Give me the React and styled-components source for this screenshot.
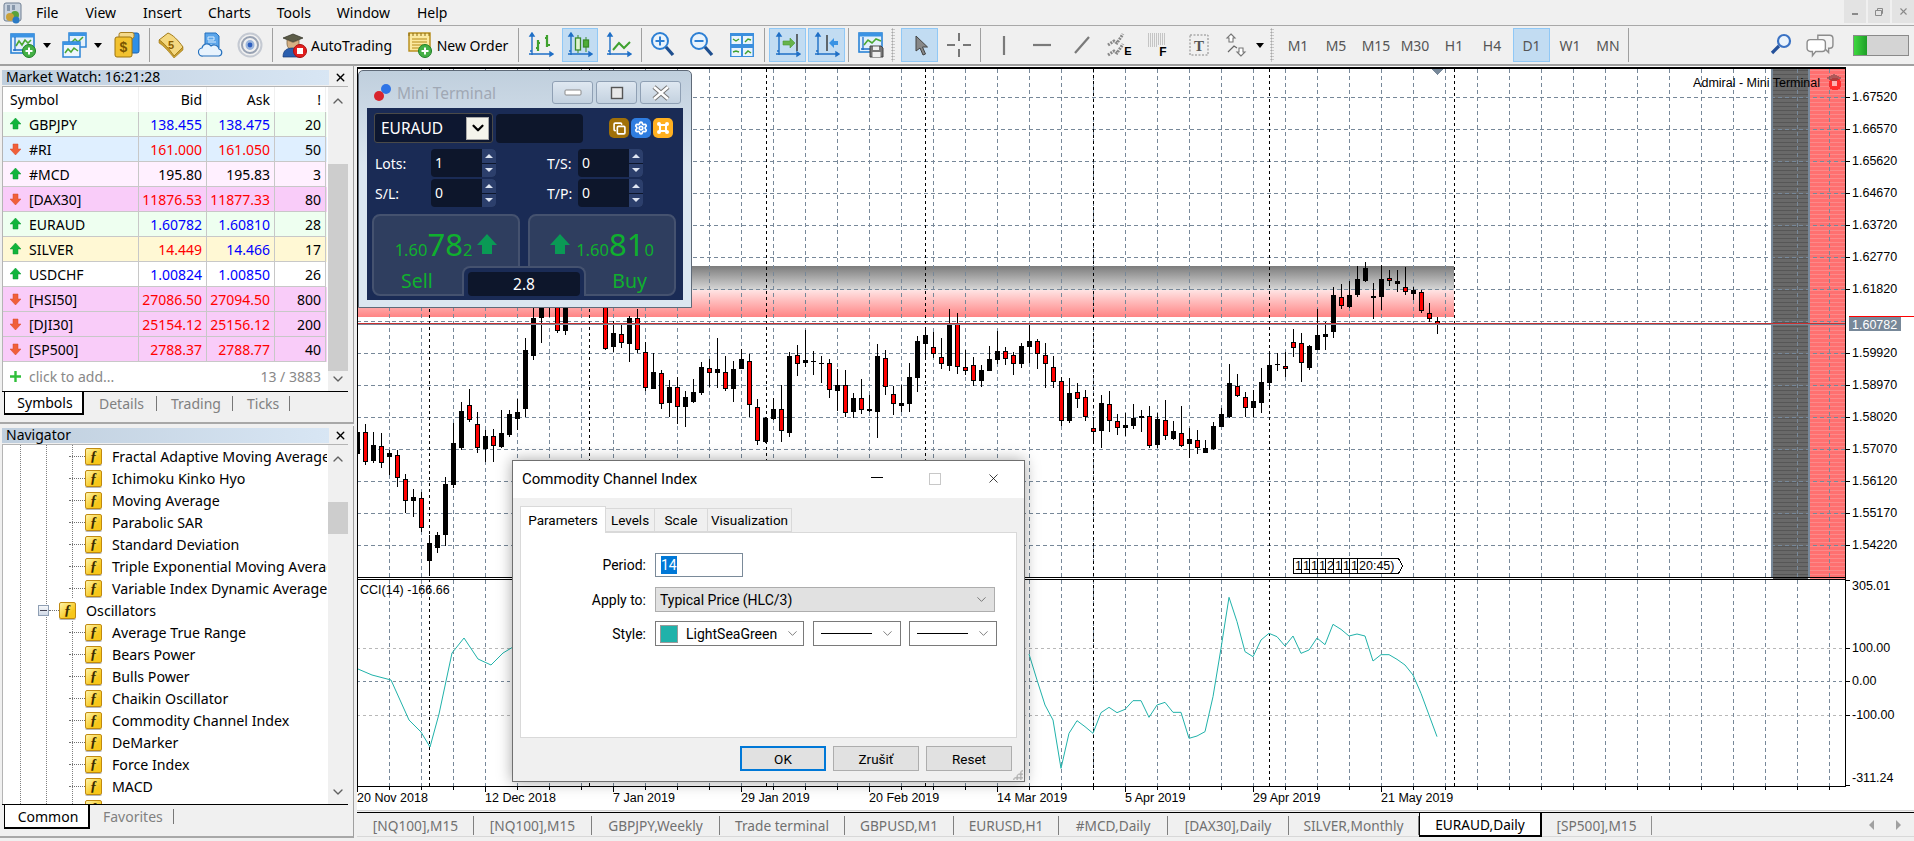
import React from 'react';
import styled, { createGlobalStyle } from 'styled-components';
import { ChevronDown, ChevronUp, X, Settings, Copy } from 'lucide-react';

const UI_FONT = '"Noto Sans", "Open Sans", sans-serif';
const DIALOG_FONT = 'Roboto, "Noto Sans", sans-serif';

const GlobalStyle = createGlobalStyle`
  html, body { margin: 0; padding: 0; background: #f0f0f0; }
  * { box-sizing: border-box; }
`;

const Page = styled.div`
  width: 1914px;
  height: 841px;
  overflow: hidden;
  display: flex;
  flex-direction: column;
  background: #f0f0f0;
  font-family: ${UI_FONT};
  font-size: 14px;
  color: #000;
`;

/* menu + toolbar */
const MenuBar = styled.div`
  height: 26px;
  flex: none;
  display: flex;
  align-items: center;
  border-bottom: 1px solid #a8a8a8;
  padding-left: 3px;
`;

const MenuItem = styled.span`
  margin-left: ${p => p.$ml}px;
  font-size: 14px;
  line-height: 25px;
`;

const WinButtons = styled.div`
  margin-left: auto;
  display: flex;
  gap: 2px;
  align-self: flex-start;
`;

const WinButton = styled.div`
  width: 22px;
  height: 23px;
  background: #e3e3e3;
  color: #8a8a8a;
  display: flex;
  align-items: center;
  justify-content: center;
`;

const Toolbar = styled.div`
  height: 40px;
  flex: none;
  display: flex;
  align-items: center;
  padding-left: 6px;
  border-bottom: 2px solid #a0a0a0;
`;

const Tool = styled.div`
  flex: none;
  width: ${p => p.$w || 36}px;
  height: 34px;
  margin-left: ${p => p.$ml || 0}px;
  display: flex;
  align-items: center;
  justify-content: center;
  gap: 4px;
  border: 1px solid ${p => (p.$active ? '#90c8f6' : 'transparent')};
  background: ${p => (p.$active ? '#c2dcf2' : 'transparent')};
  color: ${p => p.$color || '#000'};
  font-size: 14px;
`;

const ToolSep = styled.div`
  flex: none;
  width: 1px;
  height: 34px;
  margin-left: ${p => p.$ml || 4}px;
  background: #a0a0a0;
`;

const Grip = styled.div`
  flex: none;
  width: 4px;
  height: 34px;
  margin-left: ${p => p.$ml || 0}px;
  background-image: radial-gradient(#a8a8a8 45%, transparent 50%);
  background-size: 3px 3px;
`;

const DropCaret = styled.div`
  flex: none;
  width: ${p => p.$w || 12}px;
  height: 34px;
  display: flex;
  align-items: center;
  justify-content: center;
  &::after {
    content: '';
    border-left: 4px solid transparent;
    border-right: 4px solid transparent;
    border-top: 5px solid #000;
  }
`;

const StatusMeter = styled.div`
  width: 56px;
  height: 21px;
  margin: 0 5px 0 15px;
  flex: none;
  border: 1px solid #8a8a8a;
  background: linear-gradient(90deg, #3ed83e 0, #1e9e28 13px, #d4d4d4 13px);
`;

/* left column */
const Body = styled.div`
  flex: 1;
  min-height: 0;
  display: flex;
`;

const LeftColumn = styled.div`
  width: 354px;
  margin-right: 3px;
  flex: none;
  display: flex;
  flex-direction: column;
`;

const Panel = styled.div`
  width: 354px;
  height: ${p => p.$h}px;
  margin-top: ${p => p.$mt || 0}px;
  padding: ${p => p.$pt}px 5px 0 2px;
  border-right: 1px solid #a0a0a0;
  border-bottom: 2px solid #a8a8a8;
  flex: none;
`;

const PanelTitle = styled.div`
  height: 15px;
  width: 327px;
  position: relative;
  background: linear-gradient(90deg, #bfcedd, #d8e6f4);
  font-size: 14px;
  line-height: 14px;
  padding-left: 4px;
  white-space: nowrap;
`;

const PanelClose = styled(X)`
  position: absolute;
  left: 332px;
  top: 1px;
`;

const PanelBox = styled.div`
  margin-top: 1px;
  height: ${p => p.$h}px;
  display: flex;
  border: 1px solid #b4b4b4;
  border-width: 1px 1px 0 1px;
  background: #fff;
`;

const WatchTable = styled.div`
  width: 324px;
  flex: none;
`;

const WatchRow = styled.div`
  display: grid;
  grid-template-columns: 136px 68px 68px 51px;
  height: ${p => p.$h || 25}px;
  background: ${p => p.$bg || '#fff'};
`;

const WatchCell = styled.div`
  display: flex;
  align-items: center;
  justify-content: ${p => (p.$right ? 'flex-end' : 'flex-start')};
  padding: ${p => (p.$right ? '0 4px 0 0' : '0 0 0 7px')};
  gap: 8px;
  border-right: 1px solid ${p => (p.$head ? '#f0f0f0' : '#c8c8c8')};
  border-bottom: 1px solid ${p => (p.$head ? '#fff' : '#c8c8c8')};
  color: ${p => p.$color || '#000'};
  font-size: 14px;
  white-space: nowrap;
`;

const AddRow = styled.div`
  height: 29px;
  display: flex;
  align-items: center;
  gap: 8px;
  padding: 0 6px 0 7px;
  color: #888;
  font-size: 14px;
`;

const AddCount = styled.span`
  margin-left: auto;
`;

const ScrollBar = styled.div`
  width: 20px;
  margin-left: 1px;
  flex: none;
  position: relative;
  background: #f0f0f0;
  color: #606060;
  display: flex;
  flex-direction: column;
  justify-content: space-between;
  align-items: center;
  padding: ${p => p.$pad};
`;

const ScrollThumb = styled.div`
  position: absolute;
  left: 0;
  right: 0;
  top: ${p => p.$top}px;
  height: ${p => p.$h}px;
  background: #cdcdcd;
`;

const PanelTabs = styled.div`
  height: ${p => p.$h}px;
  display: flex;
  align-items: flex-start;
  border-top: 1px solid #000;
  padding-left: 2px;
`;

const PanelTab = styled.div`
  width: ${p => p.$w}px;
  height: ${p => (p.$active ? p.$h - 1 : 15)}px;
  margin-top: ${p => (p.$active ? 0 : 4)}px;
  display: flex;
  align-items: center;
  justify-content: ${p => (p.$active ? 'center' : 'flex-start')};
  padding-left: ${p => (p.$active ? 3 : p.$pl || 14)}px;
  background: ${p => (p.$active ? '#fff' : 'transparent')};
  border: ${p => (p.$active ? '1px solid #000' : 'none')};
  border-top: none;
  border-bottom-width: ${p => (p.$active ? 2 : 0)}px;
  border-right: ${p => (p.$active ? '2px solid #000' : '1px solid #777')};
  color: ${p => (p.$active ? '#000' : '#808080')};
  font-size: 14px;
`;

/* navigator tree */
const Tree = styled.div`
  width: 324px;
  flex: none;
  overflow: hidden;
`;

const guideLayer = x => `linear-gradient(#808080 50%, transparent 50%) ${x}px 0 / 1px 2px repeat-y`;

const TreeRow = styled.div`
  height: 22px;
  display: flex;
  align-items: center;
  white-space: nowrap;
  padding-left: ${p => (p.$group ? 35 : 66)}px;
  background: ${p => p.$guides.map(guideLayer).join(', ')};
`;

const TreeStub = styled.span`
  width: ${p => p.$w}px;
  flex: none;
  border-top: 1px dotted #707070;
`;

const MinusBox = styled.span`
  width: 11px;
  height: 11px;
  flex: none;
  border: 1px solid #8f9fb4;
  background: linear-gradient(#f6f8fb, #d0d9e6);
  display: flex;
  align-items: center;
  justify-content: center;
  &::after {
    content: '';
    width: 7px;
    height: 1px;
    background: #445;
  }
`;

const FnIcon = styled.span`
  width: 17px;
  height: 17px;
  flex: none;
  border: 1px solid #c08a10;
  border-radius: 2px;
  background: linear-gradient(135deg, #fff4a8, #f7c71a 70%);
  box-shadow: 0 1px 0 #b8b8b8;
  font-family: "Liberation Serif", serif;
  font-style: italic;
  font-weight: 700;
  font-size: 14px;
  line-height: 15px;
  text-align: center;
  color: #3a2a00;
`;

const TreeLabel = styled.span`
  margin-left: 10px;
  font-size: 14.2px;
`;

/* chart */
const RightColumn = styled.div`
  flex: 1;
  min-width: 0;
  display: flex;
  flex-direction: column;
`;

const ChartArea = styled.div`
  position: relative;
  height: 744px;
  flex: none;
  background: #fff;
`;

const ChartSvg = styled.svg`
  display: block;
  shape-rendering: crispEdges;
`;

const AxisText = styled.text`
  font-family: "Liberation Sans", sans-serif;
  font-size: 12.5px;
  fill: ${p => p.$fill || '#000'};
  shape-rendering: auto;
`;

const ChartTabs = styled.div`
  flex: 1;
  display: flex;
  flex-direction: column;
  border-top: 1px solid #d4d4d4;
  padding-top: 1px;
`;

const TabStrip = styled.div`
  height: 25px;
  flex: none;
  display: flex;
  align-items: flex-start;
  border-top: 1px solid #000;
  border-bottom: 1px solid #d8d8d8;
  padding-left: 1px;
`;

const ChartTab = styled.div`
  width: ${p => p.$w}px;
  height: ${p => (p.$active ? 24 : 19)}px;
  margin-top: ${p => (p.$active ? 0 : 3)}px;
  flex: none;
  display: flex;
  align-items: center;
  justify-content: center;
  white-space: nowrap;
  background: ${p => (p.$active ? '#fff' : 'transparent')};
  color: ${p => (p.$active ? '#000' : '#707070')};
  border-right: ${p => (p.$active ? '2px solid #000' : p.$last ? '1px solid #909090' : '1px solid #808080')};
  border-left: ${p => (p.$active ? '1px solid #000' : 'none')};
  border-bottom: ${p => (p.$active ? '2px solid #000' : 'none')};
  font-size: 13.7px;
`;

const TabScroll = styled.div`
  margin-left: auto;
  margin-right: 12px;
  margin-top: 7px;
  display: flex;
  gap: 20px;
`;

/* mini terminal window */
const MiniWindow = styled.div`
  position: absolute;
  left: 1px;
  top: 4px;
  width: 334px;
  height: 238px;
  border: 1px solid #5f6a78;
  border-radius: 5px 5px 0 0;
  background: linear-gradient(#c0cfdd, #dbe6f0 40%);
  padding: 0 8px;
  display: flex;
  flex-direction: column;
`;

const MiniTitleBar = styled.div`
  height: 37px;
  flex: none;
  display: flex;
  align-items: center;
  padding: 6px 2px 0 6px;
`;

const MiniTitle = styled.span`
  margin-left: 5px;
  font-size: 15.5px;
  color: #a0a8b4;
`;

const MiniWinButtons = styled.div`
  margin-left: auto;
  display: flex;
  gap: 3px;
`;

const MiniWinButton = styled.div`
  width: 41px;
  height: 23px;
  border: 1px solid #8fa0b4;
  border-radius: 3px;
  background: linear-gradient(#dfe8f1, #c3d1df);
  display: flex;
  align-items: center;
  justify-content: center;
`;

const MiniPanel = styled.div`
  position: relative;
  height: 192px;
  flex: none;
  background: #1a2b55;
  padding: 5px 5px 0;
`;

const MiniTopRow = styled.div`
  height: 30px;
  display: flex;
  align-items: center;
  padding-left: 2px;
`;

const SymbolSelect = styled.div`
  width: 119px;
  height: 30px;
  flex: none;
  border: 1px solid #4a4a48;
  border-radius: 3px;
  background: #0d1730;
  display: flex;
  align-items: center;
  justify-content: space-between;
  padding: 0 3px 0 6px;
  color: #fff;
  font-size: 15.5px;
`;

const SelectArrow = styled.div`
  width: 23px;
  height: 23px;
  background: #f4f4ec;
  border: 1px solid #a8a8a8;
  color: #000;
  display: flex;
  align-items: center;
  justify-content: center;
`;

const DarkSlot = styled.div`
  width: 87px;
  height: 29px;
  margin-left: 3px;
  border-radius: 4px;
  background: #0d162b;
`;

const MiniIcons = styled.div`
  margin-left: auto;
  margin-right: 5px;
  display: flex;
  gap: 2px;
`;

const MiniIcon = styled.div`
  width: 20px;
  height: 20px;
  border-radius: 5px;
  background: ${p => p.$bg};
  color: #fff;
  display: flex;
  align-items: center;
  justify-content: center;
`;

const FieldRow = styled.div`
  height: 28px;
  margin-top: ${p => p.$mt}px;
  display: flex;
  align-items: center;
  padding-left: 3px;
  color: #fff;
  font-size: 14px;
`;

const FieldLabel = styled.span`
  width: ${p => p.$w}px;
  margin-left: ${p => p.$ml || 0}px;
  flex: none;
`;

const SpinBox = styled.div`
  width: 65px;
  height: 28px;
  flex: none;
  display: flex;
  border-radius: 4px;
  overflow: hidden;
  background: #0d162b;
`;

const SpinValue = styled.span`
  width: 51px;
  padding-left: 4px;
  line-height: 28px;
  font-size: 14px;
`;

const SpinArrows = styled.div`
  flex: 1;
  display: flex;
  flex-direction: column;
  gap: 1px;
`;

const SpinArrow = styled.div`
  flex: 1;
  background: #2c3f6c;
  display: flex;
  align-items: center;
  justify-content: center;
  &::after {
    content: '';
    border-left: 4px solid transparent;
    border-right: 4px solid transparent;
    ${p => (p.$up ? 'border-bottom' : 'border-top')}: 4px solid #dfe6f2;
  }
`;

const TradeRow = styled.div`
  margin-top: 7px;
  display: flex;
  gap: 8px;
`;

const TradeButton = styled.div`
  width: 148px;
  height: 82px;
  border: 2px solid #45526f;
  border-radius: 8px;
  background: #2f3e5f;
  color: #0fb02e;
  display: flex;
  flex-direction: column;
  padding-top: 13px;
`;

const PriceLine = styled.div`
  height: 30px;
  display: flex;
  align-items: baseline;
  justify-content: center;
  line-height: 30px;
`;

const PriceSmall = styled.span`
  font-size: 16.5px;
`;

const PriceBig = styled.span`
  font-size: 31px;
`;

const PriceArrow = styled.svg`
  align-self: center;
  margin: ${p => p.$m};
`;

const TradeLabel = styled.div`
  margin-top: 8px;
  font-size: 19.5px;
  text-align: ${p => p.$align};
  padding: 0 27px;
`;

const SpreadNotch = styled.div`
  position: absolute;
  left: 95px;
  bottom: 4px;
  width: 124px;
  height: 30px;
  background: #1a2b55;
  border: 2px solid #45526f;
  border-bottom: none;
  border-radius: 8px 8px 0 0;
  padding: 4px 4px 0;
`;

const SpreadValue = styled.div`
  height: 24px;
  border-radius: 4px;
  background: #0d162b;
  color: #fff;
  text-align: center;
  font-size: 15.5px;
  line-height: 24px;
`;

/* dialog */
const Dialog = styled.div`
  position: absolute;
  left: 155px;
  top: 394px;
  width: 513px;
  height: 322px;
  background: #f0f0f0;
  border: 1px solid #707070;
  box-shadow: 0 0 14px rgba(0, 0, 0, 0.35);
  display: flex;
  flex-direction: column;
  font-family: ${DIALOG_FONT};
  font-size: 13.5px;
`;

const DialogHead = styled.div`
  height: 37px;
  flex: none;
  background: #fff;
  display: flex;
  align-items: center;
  padding: 0 0 2px 9px;
  font-size: 15px;
`;

const DialogControls = styled.div`
  margin-left: auto;
  display: flex;
  align-items: center;
  padding-right: 23px;
`;

const DlgMin = styled.span`
  width: 12px;
  height: 1px;
  margin-bottom: 2px;
  background: #000;
`;

const DlgMax = styled.span`
  width: 12px;
  height: 12px;
  margin-left: 46px;
  border: 1px solid #c8c8c8;
`;

const DlgClose = styled(X)`
  margin-left: 45px;
`;

const DialogTabs = styled.div`
  height: 27px;
  margin: 7px 0 0 7px;
  flex: none;
  display: flex;
  align-items: flex-end;
  position: relative;
  z-index: 1;
`;

const DialogTab = styled.div`
  width: ${p => p.$w}px;
  height: ${p => (p.$active ? 27 : 24)}px;
  margin-bottom: ${p => (p.$active ? -1 : 0)}px;
  display: flex;
  align-items: center;
  justify-content: center;
  background: ${p => (p.$active ? '#fff' : '#f0f0f0')};
  border: 1px solid #d9d9d9;
  border-left: ${p => (p.$active || p.$first ? '1px solid #d9d9d9' : 'none')};
  border-bottom: ${p => (p.$active ? 'none' : '1px solid #d9d9d9')};
`;

const DialogPanel = styled.div`
  height: 206px;
  margin: 0 7px;
  flex: none;
  background: #fff;
  border: 1px solid #d9d9d9;
  padding-top: 20px;
`;

const FormRow = styled.div`
  display: flex;
  align-items: center;
  height: ${p => p.$h}px;
  margin-bottom: ${p => p.$mb}px;
`;

const FormLabel = styled.span`
  width: 134px;
  padding-right: 9px;
  text-align: right;
  flex: none;
  font-size: 14px;
`;

const PeriodInput = styled.div`
  width: 88px;
  height: 24px;
  background: #fff;
  border: 1px solid #7a8a99;
  padding-left: 5px;
  display: flex;
  align-items: center;
  font-size: 14px;
`;

const SelectedText = styled.span`
  background: #0078d7;
  color: #fff;
  line-height: 18px;
`;

const ComboBox = styled.div`
  width: ${p => p.$w}px;
  height: ${p => p.$h || 25}px;
  margin-left: ${p => p.$ml || 0}px;
  flex: none;
  display: flex;
  align-items: center;
  background: ${p => (p.$gray ? '#e1e1e1' : '#fff')};
  border: 1px solid ${p => (p.$gray ? '#adadad' : '#7a7a7a')};
  padding: 0 5px 0 4px;
  gap: 8px;
  font-size: 14px;
`;

const ComboArrow = styled(ChevronDown)`
  margin-left: auto;
  color: #555;
  flex: none;
`;

const Swatch = styled.span`
  width: 18px;
  height: 18px;
  flex: none;
  background: #20b2aa;
  border: 1px solid #9a9a9a;
`;

const LineSample = styled.span`
  width: 53px;
  height: 1px;
  margin-left: 3px;
  background: #000;
`;

const DialogButtons = styled.div`
  display: flex;
  justify-content: flex-end;
  gap: 7px;
  padding: 8px 12px 0 0;
`;

const DialogButton = styled.div`
  width: 86px;
  height: 25px;
  display: flex;
  align-items: center;
  justify-content: center;
  background: #e1e1e1;
  border: ${p => (p.$primary ? '2px solid #0078d7' : '1px solid #adadad')};
`;

const ResizeGrip = styled.div`
  position: absolute;
  right: 1px;
  bottom: 1px;
  width: 11px;
  height: 11px;
  background-image: radial-gradient(#b0b0b0 55%, transparent 60%);
  background-size: 3.5px 3.5px;
  clip-path: polygon(100% 0, 100% 100%, 0 100%);
`;

/* toolbar icons */
const Ico = ({ children, s = 26 }) => (
  <svg width={s} height={s} viewBox="0 0 26 26">{children}</svg>
);

const PlusBadge = ({ x = 19, y = 19 }) => (
  <g>
    <circle cx={x} cy={y} r="6.5" fill="#45b045" stroke="#1d7f24" />
    <path d={`M${x - 3.5} ${y}h7M${x} ${y - 3.5}v7`} stroke="#fff" strokeWidth="2" />
  </g>
);

const AxesMark = () => (
  <path d="M4 2v21M1 22h23M4 1l-2 3h4zM25 22l-3-2v4zM2 19h2" fill="#1f6fc6" stroke="#1f6fc6" strokeWidth="1.4" />
);

const NewChartIcon = () => (
  <Ico>
    <rect x="1" y="2" width="23" height="19" fill="#e4f0fb" stroke="#2b84d6" strokeWidth="1.6" />
    <rect x="1" y="2" width="23" height="3.5" fill="#3b93e4" />
    <path d="M5 5v14M3 18h14" stroke="#1f6fc6" strokeWidth="1.3" fill="none" />
    <path d="M6 14l3-5 3 4 3-5 3 3 3-3" stroke="#4aa832" strokeWidth="1.6" fill="none" />
    <PlusBadge />
  </Ico>
);

const ProfilesIcon = () => (
  <Ico>
    <rect x="7" y="1" width="17" height="14" fill="#e4f0fb" stroke="#2b84d6" strokeWidth="1.5" />
    <rect x="7" y="1" width="17" height="3" fill="#3b93e4" />
    <path d="M9 11l4-4 3 3 5-5" stroke="#4aa832" strokeWidth="1.5" fill="none" />
    <rect x="1" y="10" width="17" height="15" fill="#eef6fd" stroke="#2b84d6" strokeWidth="1.5" />
    <rect x="1" y="10" width="17" height="3" fill="#3b93e4" />
    <path d="M3 21l3-4 3 3 3-4 4 3" stroke="#4aa832" strokeWidth="1.5" fill="none" />
  </Ico>
);

const GoldDocsIcon = () => (
  <Ico>
    <rect x="9" y="1" width="16" height="20" rx="2" fill="#2f8fe6" stroke="#1a63b0" />
    <rect x="5" y="0.5" width="15" height="6" rx="2" fill="#f4d98a" stroke="#a87f20" />
    <rect x="1" y="5" width="17" height="20" rx="2" fill="#f2c230" stroke="#9c7410" />
    <text x="9.5" y="20" textAnchor="middle" fontFamily="Liberation Sans, sans-serif" fontWeight="700" fontSize="14" fill="#7a5500">$</text>
  </Ico>
);

const BookIcon = () => (
  <Ico>
    <path d="M1 8L10 1c5 2 10 7 15 14l-9 9C11 17 6 11 1 8z" fill="#f4d880" stroke="#a17a18" />
    <path d="M1 8v3c5 3 10 9 15 15l9-8v-3l-9 9C11 17 6 11 1 8z" fill="#c9a032" stroke="#a17a18" strokeWidth="0.6" />
    <text x="13" y="17" textAnchor="middle" fontFamily="Liberation Sans, sans-serif" fontWeight="700" fontSize="11" fill="#8a5d00">5</text>
  </Ico>
);

const CloudDocIcon = () => (
  <Ico>
    <path d="M7 1h11l3 3v12H7z" fill="#5ba5ea" stroke="#2470bd" />
    <path d="M10 5h6v3h-6zM10 10h8M10 13h8" stroke="#d8ecfd" fill="none" />
    <path d="M5 24a4 4 0 0 1-1-8 5 5 0 0 1 9-2 5 5 0 0 1 8 3 3.6 3.6 0 0 1 0 7z" fill="#e8f3fd" stroke="#2470bd" strokeWidth="1.2" />
  </Ico>
);

const SignalIcon = () => (
  <Ico>
    <ellipse cx="13" cy="13" rx="11.5" ry="11.5" fill="none" stroke="#c4c9d2" strokeWidth="2" />
    <ellipse cx="13" cy="13" rx="8" ry="8" fill="none" stroke="#98a2b3" strokeWidth="2" />
    <ellipse cx="13" cy="13" rx="4.5" ry="5" fill="#9cb6dc" />
    <circle cx="13" cy="13" r="2.4" fill="#2d5fc0" />
  </Ico>
);

const AutoTradingIcon = () => (
  <Ico>
    <path d="M2 6l10-4 10 4-10 4z" fill="#5c5c48" stroke="#2e2e22" strokeWidth="0.7" />
    <path d="M6 8v4a6 6 0 0 0 12 0V8l-6 2.4z" fill="#d6b184" stroke="#6f5a3a" strokeWidth="0.7" />
    <path d="M2 25c0-7 4-9 10-9s8 2 8 9z" fill="#2a5fae" stroke="#173a75" strokeWidth="0.7" />
    <circle cx="19" cy="19" r="6.5" fill="#e21e1e" stroke="#a81010" />
    <rect x="16" y="16" width="6" height="6" fill="#fff" />
  </Ico>
);

const NewOrderIcon = () => (
  <Ico>
    <rect x="2" y="1" width="21" height="18" fill="#fbe9a0" stroke="#b58a16" strokeWidth="1.4" />
    <path d="M2 1v3M6 1v3M10 1v3M14 1v3M18 1v3M22 1v3" stroke="#8a6a10" />
    <path d="M5 7h15M5 10h15M5 13h11M5 16h8" stroke="#b58a16" />
    <PlusBadge x={18} y={19} />
  </Ico>
);

const BarsIcon = () => (
  <Ico>
    <AxesMark />
    <path d="M10 8v11M8 16h2M10 11h2M19 3v12M17 6h2M19 13h3" stroke="#3fa12e" strokeWidth="2.2" fill="none" />
  </Ico>
);

const CandlesIcon = () => (
  <Ico>
    <AxesMark />
    <path d="M11 3v18M19 5v15" stroke="#3a8a2a" />
    <rect x="8.5" y="6" width="5" height="12" fill="#dff3cf" stroke="#3a8a2a" strokeWidth="1.3" />
    <rect x="16.5" y="8" width="5" height="7" fill="#4fae38" stroke="#3a8a2a" strokeWidth="1.3" />
  </Ico>
);

const LineChartIcon = () => (
  <Ico>
    <AxesMark />
    <path d="M7 18l6-7 5 5 6-6" stroke="#3fa12e" strokeWidth="2" fill="none" />
  </Ico>
);

const ZoomIcon = ({ plus }) => (
  <Ico>
    <circle cx="10" cy="9" r="8" fill="#e9f3fc" stroke="#2c7fd4" strokeWidth="2" />
    <path d={plus ? 'M5.5 9h9M10 4.5v9' : 'M5.5 9h9'} stroke="#2c7fd4" strokeWidth="2" />
    <path d="M16 15l7 8" stroke="#1f4f8f" strokeWidth="3.4" />
  </Ico>
);

const TileIcon = () => (
  <Ico>
    <rect x="1" y="1" width="24" height="24" fill="#3b8fde" />
    <rect x="2.5" y="4" width="9.5" height="8" fill="#eaf4fc" />
    <rect x="14" y="4" width="9.5" height="8" fill="#eaf4fc" />
    <rect x="2.5" y="16" width="9.5" height="8" fill="#eaf4fc" />
    <rect x="14" y="16" width="9.5" height="8" fill="#eaf4fc" />
    <path d="M4 7l3 2 3-2M16 10l3-3 3 1M4 20l3-1 3 1M16 22l3-3 3 2" stroke="#3fa12e" strokeWidth="1.4" fill="none" />
  </Ico>
);

const AutoScrollIcon = () => (
  <Ico>
    <AxesMark />
    <path d="M22 2v17" stroke="#333" strokeWidth="1.4" />
    <path d="M8 9h7V6l5 5-5 5v-3H8z" fill="#66b34a" stroke="#4a9a30" strokeWidth="0.6" />
  </Ico>
);

const ChartShiftIcon = () => (
  <Ico>
    <AxesMark />
    <path d="M13 3v16" stroke="#333" strokeWidth="1.4" />
    <path d="M24 9h-4V6l-5 5 5 5v-3h4z" fill="#3a93e4" />
  </Ico>
);

const TemplateIcon = () => (
  <Ico>
    <rect x="1" y="1" width="23" height="19" fill="#e4f0fb" stroke="#2b84d6" strokeWidth="1.6" />
    <rect x="1" y="1" width="23" height="3.5" fill="#3b93e4" />
    <path d="M5 5v13M3 17h14" stroke="#1f6fc6" strokeWidth="1.3" fill="none" />
    <path d="M6 13l4-5 4 3 4-4 5 2" stroke="#4aa832" strokeWidth="1.6" fill="none" />
    <path d="M12 14h11l2 2v9H12z" fill="#777" stroke="#444" />
    <rect x="15" y="14.5" width="6" height="3.5" fill="#eee" />
    <rect x="14.5" y="20" width="8" height="5" fill="#eee" />
  </Ico>
);

const CursorIcon = () => (
  <Ico>
    <path d="M9 4v15l4-3 3 7 2.500-1-3-7h5z" fill="#888" stroke="#444" strokeWidth="1" />
  </Ico>
);

const CrossIcon = () => (
  <Ico>
    <path d="M13 1v8M13 17v8M1 13h8M17 13h8" stroke="#777" strokeWidth="2" />
  </Ico>
);

const VLineIcon = () => <Ico><path d="M13 4v19" stroke="#7a7a7a" strokeWidth="2.2" /></Ico>;
const HLineIcon = () => <Ico><path d="M4 13h18" stroke="#7a7a7a" strokeWidth="2.2" /></Ico>;
const TrendIcon = () => <Ico><path d="M6 21L20 5" stroke="#7a7a7a" strokeWidth="2.2" /></Ico>;

const ChannelIcon = () => (
  <Ico>
    <path d="M1 13l6-4 3 2 6-9M1 23l6-4 3 2 6-9" stroke="#888" strokeWidth="3" strokeDasharray="2 1" fill="none" />
    <text x="21" y="23" textAnchor="middle" fontFamily="Liberation Sans, sans-serif" fontWeight="700" fontSize="11">E</text>
  </Ico>
);

const FiboIcon = () => (
  <Ico>
    <path d="M3 2h18M3 4h18M3 6h18M3 8h18M3 10h18M3 12h18M3 14h10" stroke="#999" strokeDasharray="1 1" />
    <text x="18" y="24" textAnchor="middle" fontFamily="Liberation Sans, sans-serif" fontWeight="700" fontSize="12">F</text>
  </Ico>
);

const TextToolIcon = () => (
  <Ico>
    <rect x="4" y="3" width="18" height="20" fill="none" stroke="#888" strokeDasharray="2 1.5" />
    <text x="13" y="19" textAnchor="middle" fontFamily="Liberation Serif, serif" fontWeight="700" fontSize="15" fill="#555">T</text>
  </Ico>
);

const ArrowsToolIcon = () => (
  <Ico>
    <path d="M8 2l4 4H10v4H6V6H4zM18 24l-4-4h2v-4h4v4h2z" fill="#fff" stroke="#777" strokeWidth="1.1" />
    <path d="M5 20l6-6 3 2" stroke="#666" strokeWidth="1.2" fill="none" />
  </Ico>
);

const SearchIcon = () => (
  <Ico>
    <circle cx="16" cy="9" r="6" fill="#eaf3fc" stroke="#3a72c4" strokeWidth="2.2" />
    <path d="M11 14l-7 7" stroke="#24509a" strokeWidth="3.2" />
  </Ico>
);

const ChatIcon = () => (
  <Ico s={28}>
    <path d="M11 4h11a3 3 0 0 1 3 3v6a3 3 0 0 1-3 3h-1v4l-4-4h-6z" fill="#f4f4f4" stroke="#8c8c8c" strokeWidth="1.3" />
    <path d="M4 8h11a3 3 0 0 1 3 3v5a3 3 0 0 1-3 3H9l-3 4v-4H4a3 3 0 0 1-3-3v-5a3 3 0 0 1 3-3z" fill="#fff" stroke="#8c8c8c" strokeWidth="1.3" />
  </Ico>
);

const AppIcon = () => (
  <svg width="20" height="22" viewBox="0 0 20 22">
    <rect x="1" y="1" width="17" height="18" rx="2" fill="#c8d2de" stroke="#6f7f92" />
    <rect x="4" y="3" width="3" height="6" fill="#8797ab" />
    <rect x="9" y="3" width="3" height="5" fill="#8797ab" />
    <circle cx="12" cy="13" r="4" fill="#5aa23c" />
    <circle cx="7" cy="15" r="4" fill="#c9a13a" />
    <circle cx="13" cy="18" r="3.5" fill="#2a7ac4" />
  </svg>
);

const UpArrow = () => (
  <svg width="11" height="12" viewBox="0 0 11 12">
    <path d="M5.500 0L11 6H8v5H3V6H0z" fill="#12b43c" stroke="#0c9a30" strokeWidth="0.5" />
  </svg>
);

const DownArrow = () => (
  <svg width="11" height="12" viewBox="0 0 11 12">
    <path d="M5.500 12L11 6H8V1H3v5H0z" fill="#f0603a" stroke="#d84a28" strokeWidth="0.5" />
  </svg>
);

const GreenPlus = () => (
  <svg width="11" height="11" viewBox="0 0 11 11">
    <path d="M5.500 0v11M0 5.500h11" stroke="#2fbf3a" strokeWidth="2.4" />
  </svg>
);

const TradeArrow = ({ m }) => (
  <PriceArrow width="20" height="20" viewBox="0 0 20 20" $m={m}>
    <path d="M10 0l10 11h-5v9H5v-9H0z" fill="#0a9a55" />
  </PriceArrow>
);

/* data */
const WATCH = [
  { s: 'GBPJPY', b: '138.455', a: '138.475', n: '20', bg: '#eefff0', up: 1, bc: '#0000ff', ac: '#0000ff' },
  { s: '#RI', b: '161.000', a: '161.050', n: '50', bg: '#dfefff', up: 0, bc: '#ff0000', ac: '#ff0000' },
  { s: '#MCD', b: '195.80', a: '195.83', n: '3', bg: '#fff0ff', up: 1 },
  { s: '[DAX30]', b: '11876.53', a: '11877.33', n: '80', bg: '#f9ccf9', up: 0, bc: '#ff0000', ac: '#ff0000' },
  { s: 'EURAUD', b: '1.60782', a: '1.60810', n: '28', bg: '#eefff0', up: 1, bc: '#0000ff', ac: '#0000ff' },
  { s: 'SILVER', b: '14.449', a: '14.466', n: '17', bg: '#fff8d4', up: 1, bc: '#ff0000', ac: '#0000ff' },
  { s: 'USDCHF', b: '1.00824', a: '1.00850', n: '26', bg: '#ffffff', up: 1, bc: '#0000ff', ac: '#0000ff' },
  { s: '[HSI50]', b: '27086.50', a: '27094.50', n: '800', bg: '#f9ccf9', up: 0, bc: '#ff0000', ac: '#ff0000' },
  { s: '[DJI30]', b: '25154.12', a: '25156.12', n: '200', bg: '#f9ccf9', up: 0, bc: '#ff0000', ac: '#ff0000' },
  { s: '[SP500]', b: '2788.37', a: '2788.77', n: '40', bg: '#f9ccf9', up: 0, bc: '#ff0000', ac: '#ff0000' },
];

const TREE_TOP = [
  'Fractal Adaptive Moving Average',
  'Ichimoku Kinko Hyo',
  'Moving Average',
  'Parabolic SAR',
  'Standard Deviation',
  'Triple Exponential Moving Average',
  'Variable Index Dynamic Average',
];

const TREE_OSC = [
  'Average True Range',
  'Bears Power',
  'Bulls Power',
  'Chaikin Oscillator',
  'Commodity Channel Index',
  'DeMarker',
  'Force Index',
  'MACD',
  'Momentum',
];

const TABS = [
  { t: '[NQ100],M15', w: 116 },
  { t: '[NQ100],M15', w: 118 },
  { t: 'GBPJPY,Weekly', w: 128 },
  { t: 'Trade terminal', w: 125 },
  { t: 'GBPUSD,M1', w: 109 },
  { t: 'EURUSD,H1', w: 105 },
  { t: '#MCD,Daily', w: 109 },
  { t: '[DAX30],Daily', w: 121 },
  { t: 'SILVER,Monthly', w: 130 },
  { t: 'EURAUD,Daily', w: 123, active: true },
  { t: '[SP500],M15', w: 110, last: true },
];

/* candles: high, low, body top, body bottom, red; y = 300 + v / 3 */
const CANDLES = [
  [372, 495, 397, 485, 1], [397, 490, 436, 482, 0], [400, 505, 438, 488, 1], [450, 525, 458, 470, 0],
  [450, 560, 465, 533, 1], [522, 640, 538, 602, 1], [568, 652, 592, 604, 0], [577, 695, 595, 683, 1],
  [705, 825, 730, 782, 0], [695, 760, 706, 743, 0], [532, 738, 552, 704, 0], [368, 565, 430, 554, 0],
  [305, 450, 334, 444, 0], [267, 365, 316, 361, 1], [336, 458, 373, 443, 1], [390, 485, 408, 447, 0],
  [388, 485, 409, 437, 1], [330, 445, 400, 440, 0], [330, 412, 343, 404, 0], [296, 390, 337, 356, 0],
  [114, 352, 150, 326, 0], [-20, 180, 54, 167, 0], [-60, 128, -30, 53, 0], [-60, 50, -40, -30, 0],
  [-60, 100, -30, 92, 1], [-60, 104, -30, 92, 0], [-90, -20, -70, -40, 0], [-90, -20, -70, -40, 1],
  [-90, -20, -70, -40, 0], [-90, -20, -70, -40, 1], [-60, 150, -20, 146, 1], [62, 155, 99, 140, 0],
  [70, 145, 103, 128, 1], [48, 185, 54, 131, 0], [28, 158, 55, 150, 1], [127, 272, 155, 265, 1],
  [160, 268, 216, 266, 0], [210, 326, 220, 313, 1], [240, 350, 262, 310, 0], [232, 372, 262, 322, 1],
  [272, 380, 292, 320, 0], [237, 308, 277, 305, 0], [186, 284, 202, 278, 0], [178, 262, 205, 218, 1],
  [114, 263, 208, 220, 0], [168, 272, 217, 268, 1], [183, 305, 208, 268, 0], [148, 208, 178, 206, 0],
  [162, 352, 184, 316, 1], [298, 436, 322, 422, 1], [350, 430, 354, 425, 0], [294, 360, 328, 358, 0],
  [255, 425, 328, 394, 1], [157, 412, 168, 398, 0], [135, 228, 166, 193, 1], [90, 200, 181, 190, 0],
  [153, 225, 184, 187, 0], [168, 250, 190, 193, 0], [178, 294, 190, 271, 1], [207, 333, 256, 274, 0],
  [210, 352, 256, 340, 1], [280, 355, 295, 335, 0], [238, 342, 295, 330, 1], [285, 335, 328, 333, 0],
  [132, 413, 168, 335, 0], [150, 285, 175, 262, 1], [258, 345, 283, 313, 1], [255, 335, 310, 317, 0],
  [190, 335, 232, 313, 0], [107, 275, 124, 233, 0], [80, 176, 105, 133, 0], [95, 175, 142, 163, 1],
  [115, 207, 170, 193, 1], [27, 212, 72, 197, 0], [40, 222, 71, 200, 1], [150, 225, 202, 212, 1],
  [170, 257, 196, 242, 1], [195, 260, 211, 242, 0], [138, 212, 178, 212, 0], [93, 192, 154, 179, 0],
  [142, 195, 154, 176, 1], [155, 224, 166, 191, 1], [128, 205, 138, 191, 0], [72, 190, 124, 140, 0],
  [118, 207, 124, 163, 1], [130, 265, 166, 193, 1], [168, 265, 202, 245, 1], [232, 378, 244, 362, 1],
  [235, 368, 280, 362, 0], [250, 325, 277, 296, 1], [270, 362, 292, 350, 1], [350, 430, 385, 395, 1],
  [285, 443, 310, 392, 0], [273, 395, 313, 362, 1], [343, 405, 364, 383, 1], [338, 408, 376, 383, 0],
  [312, 388, 354, 378, 0], [330, 395, 349, 353, 0], [318, 443, 349, 437, 1], [338, 443, 358, 434, 0],
  [300, 420, 361, 407, 1], [362, 420, 394, 416, 0], [318, 440, 400, 437, 1], [384, 473, 418, 431, 0],
  [390, 462, 421, 445, 1], [420, 458, 445, 458, 0], [365, 450, 379, 446, 0], [325, 382, 343, 380, 0],
  [192, 355, 250, 350, 0], [222, 290, 259, 287, 1], [275, 352, 292, 325, 1], [270, 352, 304, 325, 0],
  [205, 340, 247, 308, 0], [160, 265, 196, 248, 0], [158, 212, 192, 194, 0], [155, 232, 198, 208, 1],
  [88, 170, 127, 143, 1], [100, 247, 128, 190, 1], [135, 210, 138, 203, 0], [27, 150, 106, 149, 0],
  [65, 150, 102, 110, 0], [-40, 113, -14, 95, 0], [-48, 27, -10, 17, 1], [-58, 25, -14, 21, 0],
  [-102, -10, -63, -15, 0], [-114, -55, -95, -58, 0], [-50, 57, -12, -7, 0], [-105, 30, -62, -10, 0],
  [-90, -42, -65, -56, 1], [-90, -25, -56, -49, 0], [-98, -15, -40, -25, 1], [-40, 0, -30, -17, 0],
  [-30, 38, -25, 32, 1], [10, 65, 40, 58, 1], [50, 102, 64, 73, 1],
];

const PRICES = [
  ['1.67520', 97], ['1.66570', 129], ['1.65620', 161], ['1.64670', 193], ['1.63720', 225],
  ['1.62770', 257], ['1.61820', 289], ['1.59920', 353], ['1.58970', 385], ['1.58020', 417],
  ['1.57070', 449], ['1.56120', 481], ['1.55170', 513], ['1.54220', 545],
];

const DATES = [
  ['20 Nov 2018', 357], ['12 Dec 2018', 485], ['7 Jan 2019', 613], ['29 Jan 2019', 741],
  ['20 Feb 2019', 869], ['14 Mar 2019', 997], ['5 Apr 2019', 1125], ['29 Apr 2019', 1253], ['21 May 2019', 1381],
];

const SEPARATORS = [429, 589, 766, 925, 1093, 1269, 1454];

const CCI_LEFT = [
  [358, 669], [372, 675], [391, 680], [409, 720], [421, 732], [430, 747], [439, 714],
  [452, 653], [464, 638], [478, 659], [491, 665], [503, 653], [513, 647],
];

const CCI_RIGHT = [
  252, 330, 405, 450, 595, 490, 452, 470, 490, 428, 412, 428, 418, 392, 392, 442, 405, 397, 427, 427,
  505, 498, 485, 380, 235, 82, 155, 245, 260, 210, 190, 200, 228, 198, 250, 240, 204, 224, 163, 178,
  198, 192, 198, 273, 254, 254, 268, 285, 315, 370, 435, 500,
];

const GRID_X = Array.from({ length: 46 }, (_, k) => 389 + 32 * k);
const STRIPES = Array.from({ length: 128 }, (_, k) => 70 + 4 * k);
const TIME_TAGS = ['1', '1', '1', '1', '2', '1', '1', '1'];

const Chart = () => {
  const cciRight = CCI_RIGHT.map((v, k) => `${1029 + 8 * k},${570 + v / 3}`).join(' ');
  const cciLeft = CCI_LEFT.map(p => p.join(',')).join(' ');
  return (
    <ChartSvg width="1557" height="744" viewBox="357 66 1557 744">
      <defs>
        <linearGradient id="bandGray" x1="0" y1="0" x2="0" y2="1">
          <stop offset="0" stopColor="#7c7c7c" />
          <stop offset="1" stopColor="#d8d8d8" />
        </linearGradient>
        <linearGradient id="bandRed" x1="0" y1="0" x2="0" y2="1">
          <stop offset="0" stopColor="#ffe4e4" />
          <stop offset="1" stopColor="#ff8484" />
        </linearGradient>
      </defs>

      <rect x="357" y="266" width="1097" height="24" fill="url(#bandGray)" />
      <rect x="357" y="290" width="1097" height="27" fill="url(#bandRed)" />

      <rect x="1771" y="69" width="39" height="508" fill="#778899" />
      <rect x="1773" y="69" width="35" height="508" fill="#696969" />
      <rect x="1810" y="69" width="35" height="508" fill="#ff7070" />
      {STRIPES.map(y => (
        <g key={y}>
          <rect x="1773" y={y} width="35" height="1" fill="#565656" />
          <rect x="1810" y={y} width="35" height="1" fill="#fb8a8a" />
        </g>
      ))}

      {PRICES.concat([['', 321]]).map(([, y]) => (
        <line key={y} x1="357" x2="1845" y1={y + 0.5} y2={y + 0.5} stroke="#778899" strokeDasharray="4 3" />
      ))}
      {[648, 715].map(y => (
        <line key={y} x1="357" x2="1845" y1={y + 0.5} y2={y + 0.5} stroke="#b8b8b8" strokeDasharray="3 3" />
      ))}
      <line x1="357" x2="1845" y1="681.500" y2="681.500" stroke="#778899" strokeDasharray="3 3" />
      {GRID_X.map(x => (
        <line key={x} x1={x + 0.5} x2={x + 0.5} y1="69" y2="786" stroke="#778899" strokeDasharray="4 3" />
      ))}
      {SEPARATORS.map(x => (
        <line key={x} x1={x + 0.5} x2={x + 0.5} y1="69" y2="786" stroke="#000" strokeDasharray="3 3" />
      ))}

      {CANDLES.map(([h, l, t, b, red], i) => {
        const x = 365 + 8 * i;
        const top = Math.round(300 + t / 3);
        const bottom = Math.max(top + 1, Math.round(300 + b / 3));
        return (
          <g key={i}>
            <rect x={x} y={300 + h / 3} width="1" height={(l - h) / 3} fill="#000" />
            <rect x={x - 2} y={top} width="5" height={bottom - top} fill="#000" />
            {red === 1 && bottom - top > 2 && (
              <rect x={x - 1} y={top + 1} width="3" height={bottom - top - 2} fill="#ff0000" />
            )}
          </g>
        );
      })}
      <rect x="357" y="424" width="1" height="33" fill="#000" />
      <rect x="357" y="432" width="3" height="22" fill="#000" />

      <rect x="357" y="323" width="1488" height="2" fill="#778899" />
      <rect x="357" y="323" width="1488" height="1" fill="#c83030" />

      <path d="M1432 69h11l-5.500 6z" fill="#778899" />

      <AxisText x="1820" y="87" textAnchor="end">Admiral - Mini Terminal</AxisText>
      <circle cx="1835" cy="84" r="6.500" fill="#ff2020" opacity="0.85" />
      <path d="M1826 78l8-4 8 4-8 4z" fill="#7d4a4a" opacity="0.6" />
      <rect x="1832" y="81" width="5" height="5" fill="#ffb0b0" />

      {TIME_TAGS.map((t, k) => (
        <g key={k}>
          <rect x={1293.5 + 8 * k} y="558.500" width="8" height="15" fill="#fff" stroke="#000" />
          <AxisText x={1295 + 8 * k} y="570">{t}</AxisText>
        </g>
      ))}
      <path d="M1357.500 558.500h41l4 7.500-4 7.500h-41z" fill="#fff" stroke="#000" />
      <AxisText x="1359" y="570">20:45)</AxisText>

      <polyline points={cciLeft} fill="none" stroke="#20b2aa" shapeRendering="auto" />
      <polyline points={cciRight} fill="none" stroke="#20b2aa" shapeRendering="auto" />
      <AxisText x="360" y="594">CCI(14) -166.66</AxisText>

      <rect x="357" y="68" width="1489" height="1" fill="#000" />
      <rect x="357" y="67" width="1489" height="1" fill="#000" />
      <rect x="357" y="68" width="1" height="718" fill="#000" />
      <rect x="357" y="577" width="1489" height="1" fill="#000" />
      <rect x="357" y="579" width="1489" height="1" fill="#000" />
      <rect x="357" y="786" width="1489" height="1" fill="#000" />
      <rect x="1845" y="67" width="1" height="720" fill="#000" />

      {PRICES.map(([label, y]) => (
        <g key={label}>
          <rect x="1846" y={y} width="4" height="1" fill="#000" />
          <AxisText x="1852" y={y + 4}>{label}</AxisText>
        </g>
      ))}
      <rect x="1849" y="316" width="65" height="1" fill="#ff0000" />
      <rect x="1849" y="317" width="52" height="14" fill="#778899" />
      <AxisText x="1852" y="329" $fill="#fff">1.60782</AxisText>

      <AxisText x="1852" y="590">305.01</AxisText>
      <AxisText x="1852" y="652">100.00</AxisText>
      <AxisText x="1852" y="685">0.00</AxisText>
      <AxisText x="1852" y="719">-100.00</AxisText>
      <AxisText x="1852" y="782">-311.24</AxisText>
      {[580, 648, 681, 715, 785].map(y => (
        <rect key={y} x="1846" y={y} width="4" height="1" fill="#000" />
      ))}

      {GRID_X.map(x => (
        <rect key={x} x={x} y="787" width="1" height="3" fill="#000" />
      ))}
      {DATES.map(([label, x]) => (
        <g key={label}>
          <rect x={x} y="787" width="1" height="5" fill="#000" />
          <AxisText x={x} y="802">{label}</AxisText>
        </g>
      ))}
    </ChartSvg>
  );
};

const MiniTerminal = () => (
  <MiniWindow>
    <MiniTitleBar>
      <svg width="19" height="20" viewBox="0 0 19 20">
        <circle cx="13" cy="6" r="5" fill="#2e74e6" />
        <circle cx="6" cy="13" r="5" fill="#d8242c" />
      </svg>
      <MiniTitle>Mini Terminal</MiniTitle>
      <MiniWinButtons>
        <MiniWinButton>
          <svg width="18" height="8"><rect x="1" y="1" width="16" height="5" rx="1" fill="#fff" stroke="#8a8a8a" /></svg>
        </MiniWinButton>
        <MiniWinButton>
          <svg width="14" height="14"><rect x="1.500" y="1.500" width="11" height="11" fill="#e8e8e8" stroke="#555" strokeWidth="1.4" /></svg>
        </MiniWinButton>
        <MiniWinButton>
          <svg width="20" height="16" viewBox="0 0 20 16"><path d="M3 2l14 12M17 2L3 14" stroke="#777" strokeWidth="4.500" /><path d="M3 2l14 12M17 2L3 14" stroke="#fff" strokeWidth="2.500" /></svg>
        </MiniWinButton>
      </MiniWinButtons>
    </MiniTitleBar>
    <MiniPanel>
      <MiniTopRow>
        <SymbolSelect>
          EURAUD
          <SelectArrow><ChevronDown size={18} strokeWidth={3} /></SelectArrow>
        </SymbolSelect>
        <DarkSlot />
        <MiniIcons>
          <MiniIcon $bg="#a07008"><Copy size={13} strokeWidth={3} /></MiniIcon>
          <MiniIcon $bg="#2f7de0"><Settings size={14} strokeWidth={3} /></MiniIcon>
          <MiniIcon $bg="#ffb020">
            <svg width="14" height="14" viewBox="0 0 14 14">
              <path d="M4 4h6v6H4z" fill="none" stroke="#fff" strokeWidth="2" />
              <circle cx="3" cy="3" r="2" fill="#fff" /><circle cx="11" cy="3" r="2" fill="#fff" />
              <circle cx="3" cy="11" r="2" fill="#fff" /><circle cx="11" cy="11" r="2" fill="#fff" />
            </svg>
          </MiniIcon>
        </MiniIcons>
      </MiniTopRow>
      <FieldRow $mt={6}>
        <FieldLabel $w={56}>Lots:</FieldLabel>
        <SpinBox><SpinValue>1</SpinValue><SpinArrows><SpinArrow $up /><SpinArrow /></SpinArrows></SpinBox>
        <FieldLabel $w={31} $ml={51}>T/S:</FieldLabel>
        <SpinBox><SpinValue>0</SpinValue><SpinArrows><SpinArrow $up /><SpinArrow /></SpinArrows></SpinBox>
      </FieldRow>
      <FieldRow $mt={2}>
        <FieldLabel $w={56}>S/L:</FieldLabel>
        <SpinBox><SpinValue>0</SpinValue><SpinArrows><SpinArrow $up /><SpinArrow /></SpinArrows></SpinBox>
        <FieldLabel $w={31} $ml={51}>T/P:</FieldLabel>
        <SpinBox><SpinValue>0</SpinValue><SpinArrows><SpinArrow $up /><SpinArrow /></SpinArrows></SpinBox>
      </FieldRow>
      <TradeRow>
        <TradeButton>
          <PriceLine>
            <PriceSmall>1.60</PriceSmall><PriceBig>78</PriceBig><PriceSmall>2</PriceSmall>
            <TradeArrow m="0 0 0 5px" />
          </PriceLine>
          <TradeLabel $align="left">Sell</TradeLabel>
        </TradeButton>
        <TradeButton>
          <PriceLine>
            <TradeArrow m="0 6px 0 0" />
            <PriceSmall>1.60</PriceSmall><PriceBig>81</PriceBig><PriceSmall>0</PriceSmall>
          </PriceLine>
          <TradeLabel $align="right">Buy</TradeLabel>
        </TradeButton>
      </TradeRow>
      <SpreadNotch><SpreadValue>2.8</SpreadValue></SpreadNotch>
    </MiniPanel>
  </MiniWindow>
);

const CciDialog = () => (
  <Dialog>
    <DialogHead>
      Commodity Channel Index
      <DialogControls>
        <DlgMin />
        <DlgMax />
        <DlgClose size={15} strokeWidth={1.2} />
      </DialogControls>
    </DialogHead>
    <DialogTabs>
      <DialogTab $w={86} $active>Parameters</DialogTab>
      <DialogTab $w={49}>Levels</DialogTab>
      <DialogTab $w={53}>Scale</DialogTab>
      <DialogTab $w={84}>Visualization</DialogTab>
    </DialogTabs>
    <DialogPanel>
      <FormRow $h={24} $mb={10}>
        <FormLabel>Period:</FormLabel>
        <PeriodInput><SelectedText>14</SelectedText></PeriodInput>
      </FormRow>
      <FormRow $h={25} $mb={9}>
        <FormLabel>Apply to:</FormLabel>
        <ComboBox $w={340} $gray>Typical Price (HLC/3)<ComboArrow size={15} strokeWidth={1.2} /></ComboBox>
      </FormRow>
      <FormRow $h={25} $mb={0}>
        <FormLabel>Style:</FormLabel>
        <ComboBox $w={149}><Swatch />LightSeaGreen<ComboArrow size={15} strokeWidth={1.2} /></ComboBox>
        <ComboBox $w={88} $ml={9}><LineSample /><ComboArrow size={15} strokeWidth={1.2} /></ComboBox>
        <ComboBox $w={88} $ml={8}><LineSample /><ComboArrow size={15} strokeWidth={1.2} /></ComboBox>
      </FormRow>
    </DialogPanel>
    <DialogButtons>
      <DialogButton $primary>OK</DialogButton>
      <DialogButton>Zrušiť</DialogButton>
      <DialogButton>Reset</DialogButton>
    </DialogButtons>
    <ResizeGrip />
  </Dialog>
);

const App = () => (
  <Page>
    <GlobalStyle />
    <MenuBar>
      <AppIcon />
      <MenuItem $ml={13}>File</MenuItem>
      <MenuItem $ml={27}>View</MenuItem>
      <MenuItem $ml={27}>Insert</MenuItem>
      <MenuItem $ml={26}>Charts</MenuItem>
      <MenuItem $ml={26}>Tools</MenuItem>
      <MenuItem $ml={26}>Window</MenuItem>
      <MenuItem $ml={27}>Help</MenuItem>
      <WinButtons>
        <WinButton><svg width="8" height="8"><rect x="1" y="5" width="6" height="2" fill="#8a8a8a" /></svg></WinButton>
        <WinButton><svg width="10" height="10"><path d="M1.500 3.500h6v5h-6zM3.500 3V1.500h5v5H8" fill="none" stroke="#8a8a8a" /></svg></WinButton>
        <WinButton><X size={11} strokeWidth={2.4} /></WinButton>
      </WinButtons>
    </MenuBar>
    <Toolbar>
      <Tool $w={34}><NewChartIcon /></Tool>
      <DropCaret $w={14} />
      <Tool $w={34} $ml={4}><ProfilesIcon /></Tool>
      <DropCaret />
      <Tool $w={34} $ml={6}><GoldDocsIcon /></Tool>
      <ToolSep $ml={5} />
      <Tool $w={34} $ml={4}><BookIcon /></Tool>
      <Tool $w={34} $ml={6}><CloudDocIcon /></Tool>
      <Tool $w={35} $ml={4}><SignalIcon /></Tool>
      <ToolSep $ml={5} />
      <Tool $w={119} $ml={4}><AutoTradingIcon />AutoTrading</Tool>
      <Tool $w={109} $ml={7}><NewOrderIcon />New Order</Tool>
      <ToolSep $ml={6} />
      <Tool $w={35} $ml={4}><BarsIcon /></Tool>
      <Tool $w={36} $ml={4} $active><CandlesIcon /></Tool>
      <Tool $w={34} $ml={4}><LineChartIcon /></Tool>
      <ToolSep $ml={5} />
      <Tool $ml={3}><ZoomIcon plus /></Tool>
      <Tool $ml={3}><ZoomIcon /></Tool>
      <Tool $ml={4}><TileIcon /></Tool>
      <ToolSep $ml={4} />
      <Tool $w={37} $ml={4} $active><AutoScrollIcon /></Tool>
      <Tool $w={37} $ml={2} $active><ChartShiftIcon /></Tool>
      <ToolSep $ml={3} />
      <Tool $ml={4}><TemplateIcon /></Tool>
      <Grip $ml={2} />
      <Tool $w={37} $ml={6} $active><CursorIcon /></Tool>
      <Tool $ml={3}><CrossIcon /></Tool>
      <ToolSep $ml={3} />
      <Tool $ml={5}><VLineIcon /></Tool>
      <Tool $ml={2}><HLineIcon /></Tool>
      <Tool $ml={4}><TrendIcon /></Tool>
      <Tool $ml={2}><ChannelIcon /></Tool>
      <Tool $ml={2}><FiboIcon /></Tool>
      <Tool $ml={5}><TextToolIcon /></Tool>
      <Tool $ml={1}><ArrowsToolIcon /></Tool>
      <DropCaret />
      <Grip $ml={4} />
      <Tool $ml={6} $color="#555">M1</Tool>
      <Tool $ml={2} $color="#555">M5</Tool>
      <Tool $ml={4} $color="#555">M15</Tool>
      <Tool $ml={3} $color="#555">M30</Tool>
      <Tool $ml={3} $color="#555">H1</Tool>
      <Tool $ml={2} $color="#555">H4</Tool>
      <Tool $w={37} $ml={3} $color="#555" $active>D1</Tool>
      <Tool $ml={2} $color="#555">W1</Tool>
      <Tool $ml={2} $color="#555">MN</Tool>
      <ToolSep $ml={2} />
      <Tool $ml={134}><SearchIcon /></Tool>
      <Tool $ml={3}><ChatIcon /></Tool>
      <StatusMeter />
    </Toolbar>
    <Body>
      <LeftColumn>
        <Panel $h={358} $pt={4}>
          <PanelTitle>
            Market Watch: 16:21:28
            <PanelClose size={13} strokeWidth={2.6} />
          </PanelTitle>
          <PanelBox $h={305}>
            <WatchTable>
              <WatchRow $h={25}>
                <WatchCell $head>Symbol</WatchCell>
                <WatchCell $head $right>Bid</WatchCell>
                <WatchCell $head $right>Ask</WatchCell>
                <WatchCell $head $right>!</WatchCell>
              </WatchRow>
              {WATCH.map(r => (
                <WatchRow key={r.s} $bg={r.bg}>
                  <WatchCell>{r.up ? <UpArrow /> : <DownArrow />}{r.s}</WatchCell>
                  <WatchCell $right $color={r.bc}>{r.b}</WatchCell>
                  <WatchCell $right $color={r.ac}>{r.a}</WatchCell>
                  <WatchCell $right>{r.n}</WatchCell>
                </WatchRow>
              ))}
              <AddRow><GreenPlus />click to add...<AddCount>13 / 3883</AddCount></AddRow>
            </WatchTable>
            <ScrollBar $pad="6px 0 4px">
              <ChevronUp size={16} strokeWidth={2} />
              <ScrollThumb $top={77} $h={207} />
              <ChevronDown size={16} strokeWidth={2} />
            </ScrollBar>
          </PanelBox>
          <PanelTabs $h={24}>
            <PanelTab $w={80} $h={24} $active>Symbols</PanelTab>
            <PanelTab $w={73} $pl={15}>Details</PanelTab>
            <PanelTab $w={76} $pl={14}>Trading</PanelTab>
            <PanelTab $w={57} $pl={14}>Ticks</PanelTab>
          </PanelTabs>
        </Panel>
        <Panel $h={412} $mt={2} $pt={2}>
          <PanelTitle>
            Navigator
            <PanelClose size={13} strokeWidth={2.6} />
          </PanelTitle>
          <PanelBox $h={360}>
            <Tree>
              {TREE_TOP.map((t, k) => (
                <TreeRow key={k} $guides={[17, 43, 69]}>
                  <TreeStub $w={16} />
                  <FnIcon>ƒ</FnIcon>
                  <TreeLabel>{t}</TreeLabel>
                </TreeRow>
              ))}
              <TreeRow $group $guides={[17, 43]}>
                <MinusBox />
                <TreeStub $w={10} />
                <FnIcon>ƒ</FnIcon>
                <TreeLabel>Oscillators</TreeLabel>
              </TreeRow>
              {TREE_OSC.map((t, k) => (
                <TreeRow key={k} $guides={[17, 43, 69]}>
                  <TreeStub $w={16} />
                  <FnIcon>ƒ</FnIcon>
                  <TreeLabel>{t}</TreeLabel>
                </TreeRow>
              ))}
            </Tree>
            <ScrollBar $pad="6px 0 4px">
              <ChevronUp size={16} strokeWidth={2} />
              <ScrollThumb $top={57} $h={32} />
              <ChevronDown size={16} strokeWidth={2} />
            </ScrollBar>
          </PanelBox>
          <PanelTabs $h={25}>
            <PanelTab $w={86} $h={25} $active>Common</PanelTab>
            <PanelTab $w={84} $pl={13}>Favorites</PanelTab>
          </PanelTabs>
        </Panel>
      </LeftColumn>
      <RightColumn>
        <ChartArea>
          <Chart />
          <MiniTerminal />
          <CciDialog />
        </ChartArea>
        <ChartTabs>
          <TabStrip>
            {TABS.map((tab, k) => (
              <ChartTab key={k} $w={tab.w} $active={tab.active} $last={tab.last}>{tab.t}</ChartTab>
            ))}
            <TabScroll>
              <svg width="7" height="10"><path d="M6 0v10L1 5z" fill="#a0a0a0" /></svg>
              <svg width="7" height="10"><path d="M1 0v10l5-5z" fill="#a0a0a0" /></svg>
            </TabScroll>
          </TabStrip>
        </ChartTabs>
      </RightColumn>
    </Body>
  </Page>
);

export default App;
